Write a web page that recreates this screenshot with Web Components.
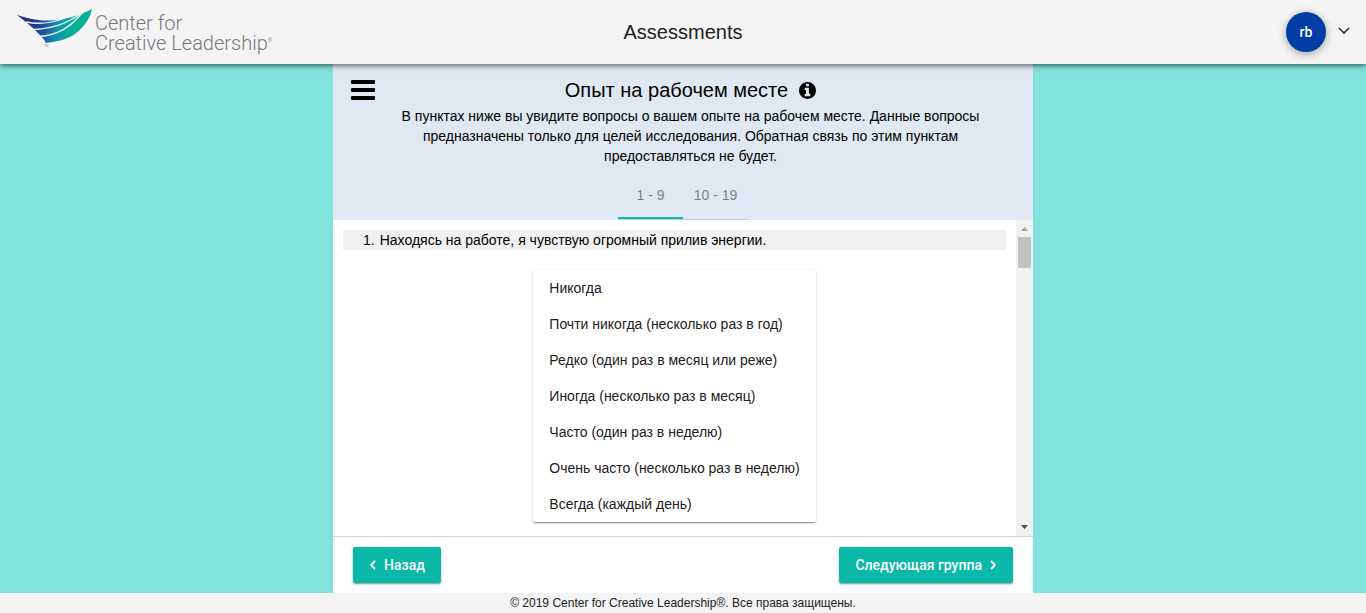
<!DOCTYPE html>
<html lang="ru">
<head>
<meta charset="utf-8">
<title>Assessments</title>
<style>
html, body { height: 100%; }
body { margin: 0; font-family: "Liberation Sans", Arial, sans-serif; font-size: 14px; line-height: 20px; color: #000; background: #82e2dc; }
</style>
</head>
<body>
<assessment-app></assessment-app>

<template id="tpl-logo">
<style>
:host { display: block; }
a { display: flex; gap: 3px; color: #74797c; text-decoration: none; }
.name { font: 300 20px/20px Roboto, "Open Sans", sans-serif; padding-top: 4px; white-space: nowrap; }
.mark { font-size: 6px; line-height: 6px; padding-top: 28px; margin-left: -3px; }
</style>
<a href="#" aria-label="Center for Creative Leadership">
<svg width="76" height="40" viewBox="0 0 76 40" aria-hidden="true">
<defs><linearGradient id="g" gradientUnits="userSpaceOnUse" x1="16" y1="12" x2="56" y2="20">
<stop offset="0" stop-color="#27348b"/><stop offset=".3" stop-color="#1f4b9c"/><stop offset=".65" stop-color="#0f93b0"/><stop offset="1" stop-color="#08b095"/></linearGradient></defs>
<path fill="url(#g)" d="M1 6C11 9 21 12 33 11.500C48 11 63 7 76 0C74 10 67 20 56 27C48 31 39 33 30 34C27 28 18 19 1 6Z"/>
<g fill="none" stroke="#f4f4f4" stroke-width="1.3"><path d="M10 13C20 15 34 15 49 9"/><path d="M17 20.500C34 20 49 16 64 5"/><path d="M23 27.500C41 26 54 19 66 4"/></g>
<text x="28" y="38" font-size="3" fill="#7b8083">TM</text>
</svg>
<span class="name">Center for<br>Creative Leadership</span><span class="mark">®</span>
</a>
</template>

<template id="tpl-header">
<style>
:host { display: grid; grid-template-columns: 1fr auto 1fr; align-items: center; height: 64px; background: #f4f4f4; position: relative; z-index: 1; box-shadow: 0 1px 6px rgba(0,0,0,.7); }
ccl-logo { align-self: start; padding: 9px 0 0 16px; }
h1 { margin: 0; font-size: 20px; line-height: 24px; font-weight: 400; color: #212121; }
.user { justify-self: end; display: flex; align-items: center; gap: 12px; padding: 0 16px 0 0; background: none; border: 0; font: inherit; color: #212121; }
.avatar { width: 40px; height: 40px; border-radius: 50%; background: #003da6; color: #fff; font-family: Roboto, sans-serif; font-weight: 500; line-height: 40px; text-align: center; box-shadow: 0 2px 8px rgba(0,0,0,.35); }
svg { display: block; }
</style>
<ccl-logo></ccl-logo>
<h1><slot></slot></h1>
<button class="user" type="button" aria-label="rb"><span class="avatar">rb</span>
<svg width="12" height="12" viewBox="0 0 12 12" fill="none" stroke="#333" stroke-width="1.6"><path d="M1 2l5 5 5-5"/></svg></button>
</template>

<template id="tpl-intro">
<style>
:host { display: grid; grid-template-columns: 60px 1fr 45px; background: #e0e8f3; padding-top: 16px; }
.menu { align-self: start; border: 0; background: none; padding: 0 0 0 18px; }
svg { display: block; }
.text { text-align: center; }
h2 { display: flex; justify-content: center; align-items: center; gap: 11px; margin: 0; font-size: 20px; line-height: 20px; font-weight: 400; }
.info { border: 0; background: none; padding: 0; }
p { margin: 6px 0; }
nav { grid-column: 1 / -1; display: flex; justify-content: center; }
nav a { box-sizing: border-box; width: 65px; height: 48px; line-height: 46px; text-align: center; color: #7b8088; text-decoration: none; border-bottom: 1px solid #c5ccd7; }
nav a[aria-current] { box-shadow: inset 0 -2px #09b8a8; }
</style>
<button class="menu" type="button" aria-label="Меню"><svg width="24" height="20" viewBox="0 0 24 20"><path d="M1 0h22q1 0 1 1v2q0 1-1 1H1q-1 0-1-1V1q0-1 1-1zM1 8h22q1 0 1 1v2q0 1-1 1H1q-1 0-1-1V9q0-1 1-1zM1 16h22q1 0 1 1v2q0 1-1 1H1q-1 0-1-1v-2q0-1 1-1z"/></svg></button>
<div class="text">
<h2><slot name="title"></slot><button class="info" type="button" aria-label="Информация"><svg width="17" height="17" viewBox="0 0 1536 1536"><path d="M1024 1248v-160q0-14-9-23t-23-9h-96V544q0-14-9-23t-23-9H544q-14 0-23 9t-9 23v160q0 14 9 23t23 9h96v320h-96q-14 0-23 9t-9 23v160q0 14 9 23t23 9h448q14 0 23-9t9-23zM896 352V192q0-14-9-23t-23-9H672q-14 0-23 9t-9 23v160q0 14 9 23t23 9h192q14 0 23-9t9-23zm640 416q0 209-103 385.500T1153.500 1433 768 1536t-385.500-103T103 1153.500 0 768t103-385.500T382.500 103 768 0t385.500 103T1433 382.500 1536 768z"/></svg></button></h2>
<p><slot></slot></p>
</div>
<nav><a href="#1" aria-current="page">1 - 9</a><a href="#10">10 - 19</a></nav>
</template>

<template id="tpl-question">
<style>
:host { display: flex; flex-direction: column; align-items: center; gap: 20px; }
.stem { align-self: stretch; display: flex; gap: 5px; padding-left: 20px; background: #f1f1f1; }
.card { display: flex; flex-direction: column; border-radius: 2px; background: #fff; box-shadow: 0 1px 3px rgba(0,0,0,.2), 0 1px 1px rgba(0,0,0,.14), 0 2px 1px -1px rgba(0,0,0,.2); }
</style>
<div class="stem"><span class="number"></span><slot name="stem"></slot></div>
<div class="card" role="group"><slot></slot></div>
</template>

<template id="tpl-option">
<style>
:host { display: block; }
button { width: 100%; height: 36px; padding: 0 16px; border: 0; background: none; font: inherit; line-height: 36px; text-align: left; color: #212121; white-space: nowrap; }
</style>
<button type="button"><slot></slot></button>
</template>

<template id="tpl-scroll">
<style>
:host { display: flex; min-height: 0; background: #fff; }
.view { flex: 1; padding: 10px; overflow: hidden; }
.bar { display: flex; flex-direction: column; align-items: center; width: 17px; background: #f1f1f1; }
.bar svg { display: block; }
.thumb { width: 13px; height: 31px; background: #c1c1c1; margin-bottom: auto; }
</style>
<div class="view"><slot></slot></div>
<div class="bar" aria-hidden="true">
<svg width="17" height="17" viewBox="0 0 17 17" fill="#a3a3a3"><path d="M5 11l3.500-4 3.500 4z"/></svg>
<div class="thumb"></div>
<svg width="17" height="17" viewBox="0 0 17 17" fill="#505050"><path d="M5 6l3.500 4L12 6z"/></svg>
</div>
</template>

<template id="tpl-button">
<style>
:host { display: block; }
button { display: flex; align-items: center; gap: 8px; height: 36px; padding: 0 16px; border: 0; border-radius: 2px; background: #09b8a8; color: #fff; font: 500 14px/36px Roboto, sans-serif; box-shadow: 0 1px 3px rgba(0,0,0,.3), 0 2px 1px -1px rgba(0,0,0,.2); }
:host([back]) button { flex-direction: row-reverse; }
:host([back]) svg { transform: rotate(180deg); }
</style>
<button type="button"><slot></slot><svg width="7" height="10" viewBox="0 0 7 10" fill="none" stroke="#fff" stroke-width="1.8"><path d="M1 1l4 4-4 4"/></svg></button>
</template>

<template id="tpl-app">
<style>
:host { display: flex; flex-direction: column; height: 100%; }
main { flex: 1; min-height: 0; width: 100%; max-width: 700px; margin: 0 auto; display: flex; flex-direction: column; background: #fff; }
scroll-pane { flex: 1; }
.actions { display: flex; justify-content: space-between; padding: 10px 20px; border-top: 1px solid #d3d3d3; }
footer { background: #f4f4f4; font-size: 12px; line-height: 20px; text-align: center; color: #212121; }
</style>
<app-header>Assessments</app-header>
<main>
<section-intro><span slot="title">Опыт на рабочем месте</span>В пунктах ниже вы увидите вопросы о вашем опыте на рабочем месте. Данные вопросы предназначены только для целей исследования. Обратная связь по этим пунктам предоставляться не будет.</section-intro>
<scroll-pane>
<survey-question number="1"><span slot="stem">Находясь на работе, я чувствую огромный прилив энергии.</span>
<answer-option>Никогда</answer-option>
<answer-option>Почти никогда (несколько раз в год)</answer-option>
<answer-option>Редко (один раз в месяц или реже)</answer-option>
<answer-option>Иногда (несколько раз в месяц)</answer-option>
<answer-option>Часто (один раз в неделю)</answer-option>
<answer-option>Очень часто (несколько раз в неделю)</answer-option>
<answer-option>Всегда (каждый день)</answer-option>
</survey-question>
</scroll-pane>
<div class="actions"><nav-button back>Назад</nav-button><nav-button>Следующая группа</nav-button></div>
</main>
<footer>© 2019 Center for Creative Leadership®. Все права защищены.</footer>
</template>

<script>
class TemplateElement extends HTMLElement {
  constructor() {
    super();
    const tpl = document.getElementById(this.constructor.template);
    this.attachShadow({ mode: 'open' }).appendChild(tpl.content.cloneNode(true));
  }
}
class CclLogo extends TemplateElement { static template = 'tpl-logo'; }
class AppHeader extends TemplateElement { static template = 'tpl-header'; }
class SectionIntro extends TemplateElement { static template = 'tpl-intro'; }
class SurveyQuestion extends TemplateElement {
  static template = 'tpl-question';
  connectedCallback() {
    this.shadowRoot.querySelector('.number').textContent = this.getAttribute('number') + '.';
  }
}
class AnswerOption extends TemplateElement { static template = 'tpl-option'; }
class ScrollPane extends TemplateElement { static template = 'tpl-scroll'; }
class NavButton extends TemplateElement { static template = 'tpl-button'; }
class AssessmentApp extends TemplateElement { static template = 'tpl-app'; }
customElements.define('ccl-logo', CclLogo);
customElements.define('app-header', AppHeader);
customElements.define('section-intro', SectionIntro);
customElements.define('survey-question', SurveyQuestion);
customElements.define('answer-option', AnswerOption);
customElements.define('scroll-pane', ScrollPane);
customElements.define('nav-button', NavButton);
customElements.define('assessment-app', AssessmentApp);
</script>
</body>
</html>
